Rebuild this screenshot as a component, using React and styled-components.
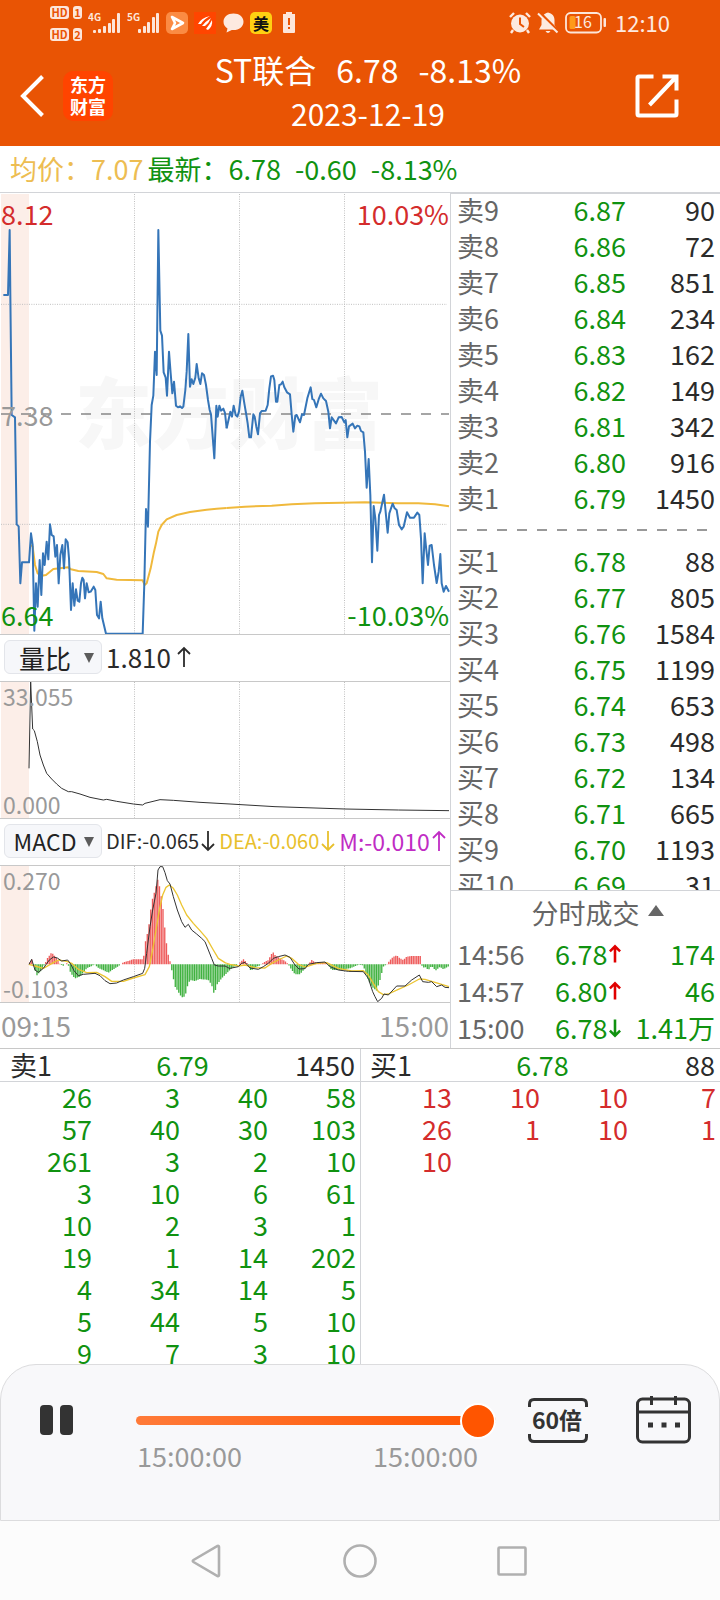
import React, { useState } from "react";
import styled, { createGlobalStyle } from "styled-components";

const GREEN = "#109210";
const RED = "#d42c2c";

// chart drawings use three units per pixel; lines are stored in two halves
const HALF = 675;

const priceLeft =
  "10,330 24,330 29,135 31,330 35,690 45,697 50,1018 56,1024 61,1195 66,1132 87,1132 93,1045 98,1080 103,1337 108,1195 113,1265 119,1125 124,1230 129,1105 134,1140 140,1070 145,1123 150,1018 155,1050 161,1054 166,1115 171,1080 176,1195 181,1110 187,1080 192,1150 197,1063 203,1072 207,1120 213,1275 218,1195 223,1262 228,1213 233,1247 238,1250 243,1195 247,1178 251,1185 255,1240 260,1195 266,1222 272,1220 281,1205 286,1215 291,1290 297,1300 302,1250 307,1300 318,1346 428,1346 433,1195 438,972 444,1025 450,770 455,660 460,632 465,500 470,570 475,135 481,437 486,452 491,562 497,578 501,632 507,500 512,565 517,625 522,590 528,662 534,667 540,664 546,669 550,665 556,615 560,560 565,447 570,605 575,583 580,597 586,578 590,537 596,580 601,597 606,565 612,570 618,600 624,645 629,675 633,688 643,820 649,662 653,695 658,662 663,677 670,671 675,684 680,730";
const priceRight =
  "5,730 16,680 21,695 26,662 32,690 37,695 42,680 47,635 52,617 58,655 64,690 68,715 73,757 78,757 85,688 89,695 94,725 99,748 105,685 110,678 122,677 128,660 133,610 138,574 144,572 148,585 153,650 157,650 163,600 168,598 173,590 178,607 186,622 195,628 200,688 205,740 211,692 215,690 225,712 231,688 237,690 247,640 257,607 262,642 267,645 274,667 282,640 288,626 295,640 303,648 310,680 315,730 320,697 333,715 341,697 350,696 358,712 362,705 367,757 372,724 383,716 390,730 397,722 403,724 408,738 415,742 420,800 425,908 431,822 436,930 441,1132 446,963 451,1000 457,1097 462,990 466,980 477,929 488,1043 493,985 498,970 503,956 509,970 515,975 522,1020 530,1033 536,1025 546,982 555,998 567,998 577,983 583,990 588,1060 593,1195 599,1045 604,1095 609,1140 614,1082 620,1080 627,1140 635,1194 641,1160 646,1107 650,1195 656,1220 663,1203 672,1220";
const avgLeft =
  "93,1080 98,1085 105,1140 113,1165 125,1172 138,1170 150,1160 160,1152 205,1147 213,1153 235,1158 290,1161 310,1167 320,1180 350,1184 428,1186 434,1200 440,1195 452,1150 462,1100 468,1075 475,1040 485,1020 500,1003 530,990 570,981 620,974 650,971 680,969";
const avgRight = "5,969 60,965 140,962 200,958 270,955 350,953 420,952 520,955 580,955 630,958 672,964";
const ratioLeft =
  "87,415 92,156 98,297 103,302 112,335 120,375 130,405 140,430 155,447 170,462 185,475 205,485 215,485 240,492 270,502 310,510 320,508 350,514 400,522 428,525 435,520 480,509 520,511 600,517 690,522";
const ratioRight = "15,522 150,530 360,537 520,540 672,542";
const difLeft =
  "87,1003 95,988 105,1020 115,1027 130,1015 148,990 160,981 172,984 185,993 203,990 212,1002 222,1022 235,1037 250,1033 285,1030 300,1037 315,1052 330,1061 350,1059 370,1050 400,1040 428,1030 434,1015 440,970 450,890 458,840 468,790 474,720 480,710 488,710 495,728 502,752 510,762 520,800 532,840 545,875 555,892 565,883 575,900 590,912 605,925 615,935 625,960 635,985 643,1005 655,1008 675,1008 690,1016";
const difRight =
  "15,1015 40,1010 50,1000 60,997 75,1014 100,1018 115,1010 130,1000 145,985 160,980 180,975 195,982 210,1005 222,1017 240,1016 250,1003 275,998 300,996 315,1010 340,1020 370,1024 415,1025 430,1045 443,1085 450,1100 458,1115 470,1105 477,1092 490,1095 515,1068 540,1068 560,1050 583,1035 593,1055 610,1057 620,1055 635,1070 650,1065 660,1072 672,1073";
const deaLeft =
  "87,1003 105,1008 130,1015 160,998 175,990 200,994 215,1000 235,1018 260,1028 290,1027 315,1040 335,1054 370,1054 400,1044 435,1034 448,1010 458,960 468,900 478,840 488,795 498,772 508,765 520,775 532,795 545,825 560,855 580,880 600,902 620,925 640,960 655,985 675,998 680,1000";
const deaRight =
  "5,1000 15,1003 40,1008 60,1005 90,1013 120,1014 140,1000 160,990 185,978 200,985 220,1003 240,1011 275,1000 305,998 340,1015 380,1023 415,1022 430,1035 445,1060 460,1085 475,1094 490,1092 520,1078 550,1065 583,1047 600,1048 640,1060 672,1070";

// height of the MACD bars around the zero line, [x, y]
const ZERO = 1003;
const barShape = [
  [88, 1000], [95, 988], [100, 1003], [110, 1037], [125, 1020], [134, 1003], [142, 985], [155, 967], [170, 985],
  [180, 1003], [190, 1007], [200, 999], [207, 1010], [212, 1030], [225, 1045], [240, 1040], [260, 1015], [285, 1003],
  [292, 1012], [325, 1028], [360, 1005], [370, 997], [400, 988], [430, 988], [437, 930], [445, 900], [455, 815],
  [465, 780], [475, 743], [480, 780], [487, 815], [492, 870], [497, 920], [503, 968], [508, 985], [512, 1003],
  [517, 1030], [525, 1070], [545, 1102], [555, 1100], [562, 1070], [570, 1050], [585, 1053], [600, 1047],
  [625, 1050], [635, 1065], [643, 1095], [650, 1065], [665, 1045], [680, 1030], [695, 1015], [715, 1003],
  [730, 987], [742, 1000], [753, 1023], [765, 1012], [780, 1006], [790, 998], [805, 990], [818, 965], [825, 975],
  [840, 985], [855, 993], [865, 1003], [875, 1020], [885, 1033], [900, 1033], [915, 1015], [925, 1003],
  [935, 990], [945, 997], [975, 997], [985, 1005], [995, 1020], [1020, 1020], [1050, 1015], [1075, 1004],
  [1090, 1006], [1100, 1040], [1115, 1070], [1130, 1082], [1140, 1050], [1150, 1010], [1160, 1003], [1170, 990],
  [1180, 980], [1190, 976], [1200, 985], [1210, 990], [1220, 980], [1235, 978], [1262, 978], [1267, 1015],
  [1275, 1010], [1285, 1020], [1295, 1008], [1307, 1022], [1320, 1010], [1330, 1018], [1347, 1008]
];

const bars = [];
for (let x = 90, i = 0; x < 1347; x += 5.25) {
  while (i < barShape.length - 2 && barShape[i + 1][0] < x) i++;
  const [x0, y0] = barShape[i];
  const [x1, y1] = barShape[i + 1];
  bars.push([x, y0 + ((y1 - y0) * (x - x0)) / (x1 - x0)]);
}
const barPath = list => list.map(([x, y]) => `M${x.toFixed(1)} ${ZERO}V${y.toFixed(1)}`).join("");

const sells = [
  ["卖9", "6.87", "90"],
  ["卖8", "6.86", "72"],
  ["卖7", "6.85", "851"],
  ["卖6", "6.84", "234"],
  ["卖5", "6.83", "162"],
  ["卖4", "6.82", "149"],
  ["卖3", "6.81", "342"],
  ["卖2", "6.80", "916"],
  ["卖1", "6.79", "1450"]
];
const buys = [
  ["买1", "6.78", "88"],
  ["买2", "6.77", "805"],
  ["买3", "6.76", "1584"],
  ["买4", "6.75", "1199"],
  ["买5", "6.74", "653"],
  ["买6", "6.73", "498"],
  ["买7", "6.72", "134"],
  ["买8", "6.71", "665"],
  ["买9", "6.70", "1193"],
  ["买10", "6.69", "31"]
];
const trades = [
  { time: "14:56", price: "6.78", up: true, amount: "174" },
  { time: "14:57", price: "6.80", up: true, amount: "46" },
  { time: "15:00", price: "6.78", up: false, amount: "1.41万" }
];
const sellQueue = [
  [26, 3, 40, 58],
  [57, 40, 30, 103],
  [261, 3, 2, 10],
  [3, 10, 6, 61],
  [10, 2, 3, 1],
  [19, 1, 14, 202],
  [4, 34, 14, 5],
  [5, 44, 5, 10],
  [9, 7, 3, 10]
];
const buyQueue = [[13, 10, 10, 7], [26, 1, 10, 1], [10]];

function Halves({ left, right, color, width }) {
  return (
    <g fill="none" stroke={color} strokeWidth={width} strokeLinejoin="round">
      <polyline points={left} />
      <polyline points={right} transform={`translate(${HALF} 0)`} />
    </g>
  );
}

function Grid({ top, bottom, rows = [] }) {
  return (
    <>
      <rect x="3" y={top} width="84" height={bottom - top} fill="#fceee8" />
      <g stroke="#c0c0c0" strokeWidth="3" strokeDasharray="3 4">
        {[403.5, 718.5, 1033.5].map(x => (
          <line key={x} x1={x} x2={x} y1={top} y2={bottom} />
        ))}
        {rows.map(y => (
          <line key={y} x1="3" x2="1341" y1={y} y2={y} />
        ))}
      </g>
    </>
  );
}

function Arrow({ up, color, width = 14, height = 24, stroke = 1.8 }) {
  return (
    <svg width={width} height={height} viewBox="0 0 14 22" aria-hidden="true">
      <path
        d={up ? "M7 21V2M1 8L7 2L13 8" : "M7 1V20M1 14L7 20L13 14"}
        fill="none"
        stroke={color}
        strokeWidth={stroke}
      />
    </svg>
  );
}

function Signal({ label, bars: heights }) {
  return (
    <svg width="33" height="22" viewBox="0 0 33 22">
      <text x="0" y="9" fontSize="10" fontWeight="700" fill="#fde6da">
        {label}
      </text>
      <g fill="#fde6da">
        {heights.map(([x, h]) => (
          <rect key={x} x={x} y={21 - h} width="3" height={h} rx="1" />
        ))}
      </g>
    </svg>
  );
}

function StatusBar() {
  return (
    <Status>
      <Cards>
        {["1", "2"].map(n => (
          <Card key={n}>
            <Badge $wide>HD</Badge>
            <Badge>{n}</Badge>
          </Card>
        ))}
      </Cards>
      <Signal label="4G" bars={[[5, 3], [10, 4], [15, 7], [20, 10], [24, 14], [29, 20]]} />
      <Signal label="5G" bars={[[11, 4], [16, 7], [20, 11], [25, 16], [29, 20]]} />
      <svg width="22" height="22" viewBox="0 0 22 22">
        <rect width="22" height="22" rx="5" fill="#fb8b43" />
        <path d="M6 5L17 11L6 17L9 11Z" fill="#fb8b43" stroke="#fff" strokeWidth="2.6" strokeLinejoin="round" />
      </svg>
      <svg width="22" height="22" viewBox="0 0 22 22">
        <rect width="22" height="22" fill="#ff4500" />
        <path d="M4 12Q7 6 16 4Q10 7 7 12ZM8 14Q12 9 17 6Q15 11 11 14ZM12 17Q16 12 18 8Q19 14 14 18Z" fill="#fff" />
      </svg>
      <svg width="22" height="22" viewBox="0 0 22 22">
        <path d="M11.500 1.500C5.700 1.500 1.500 5 1.500 9.800C1.500 12.800 3.200 15.200 5.500 16.600L4.500 20.500L9.800 18C16.500 18.700 21.500 15 21.500 9.800C21.500 5 17.300 1.500 11.500 1.500Z" fill="#fdeae0" />
      </svg>
      <Meituan>美</Meituan>
      <svg width="22" height="22" viewBox="0 0 22 22">
        <path d="M8 0H14V2H17V20Q17 21 16 21H6Q5 21 5 20V2H8Z" fill="#fde6da" />
        <path d="M11 6V13M11 15V17" stroke="#e95404" strokeWidth="2" />
      </svg>
      <Spacer />
      <svg width="22" height="22" viewBox="0 0 22 22">
        <circle cx="11" cy="11.500" r="9" fill="#fdeae0" />
        <path d="M1 5L5 1M17 1L21 5M4 18L2 21M18 18L20 21" stroke="#fdeae0" strokeWidth="2.400" />
        <path d="M11 5.500V12L15 15" fill="none" stroke="#e95404" strokeWidth="2" />
      </svg>
      <svg width="22" height="22" viewBox="0 0 22 22">
        <path d="M11 0.500C6.500 1.500 4.500 5 4.500 9V13L2 17.500H20L17.500 13V8C17.500 4 15 1.300 11 0.500ZM8.500 19H13.500Q11 23 8.500 19Z" fill="#fdeae0" />
        <path d="M2 0L22 20" stroke="#e95404" strokeWidth="3" />
        <path d="M1 1.500L20.500 20.500" stroke="#fdeae0" strokeWidth="2" />
      </svg>
      <svg width="42" height="22" viewBox="0 0 42 22">
        <rect x="1" y="1" width="35" height="19.500" rx="4.500" fill="none" stroke="#fde6da" strokeWidth="1.800" />
        <rect x="4.500" y="4" width="6" height="13" rx="1.500" fill="#ff9a1a" />
        <rect x="38.500" y="6" width="2.500" height="9" rx="1" fill="#fde6da" />
        <text x="18" y="16" fontSize="16" textAnchor="middle" fill="#fdeae0">
          16
        </text>
      </svg>
      <Clock>12:10</Clock>
    </Status>
  );
}

function Header() {
  return (
    <TitleBar>
      <TitleSide>
        <IconButton aria-label="返回">
          <svg width="32" height="42" viewBox="0 0 32 42">
            <path d="M26.500 1.500L7 21L26.500 40.500" fill="none" stroke="#fff" strokeWidth="4" />
          </svg>
        </IconButton>
        <Logo>
          东方
          <br />
          财富
        </Logo>
      </TitleSide>
      <TitleText>
        <TitleLine>
          <span>ST联合</span>
          <span>6.78</span>
          <span>-8.13%</span>
        </TitleLine>
        <DateLine>2023-12-19</DateLine>
      </TitleText>
      <TitleSide $end>
        <IconButton aria-label="分享">
          <svg width="44" height="44" viewBox="0 0 44 44">
            <g fill="none" stroke="#fff" strokeWidth="4">
              <path d="M18.500 2.500H4Q2.500 2.500 2.500 4V40Q2.500 41.500 4 41.500H40Q41.500 41.500 41.500 40V25.500" />
              <path d="M27.500 2.500H41.500V16.500M41.500 2.500L14.500 31" />
            </g>
          </svg>
        </IconButton>
      </TitleSide>
    </TitleBar>
  );
}

function Indicator({ label, value, size, children }) {
  return (
    <IndicatorBar>
      <Picker>
        <Select aria-label={label} defaultValue={value} $size={size}>
          <option>{value}</option>
        </Select>
        <svg width="10" height="10" viewBox="0 0 10 10">
          <path d="M0 0H10L5 10Z" fill="#5c5c5c" />
        </svg>
      </Picker>
      {children}
    </IndicatorBar>
  );
}

function Charts() {
  return (
    <ChartColumn>
      <Chart>
        <Watermark>东方财富</Watermark>
        <Plot $height={441} viewBox="0 24 1350 1323" preserveAspectRatio="none">
          <Grid top={27} bottom={1347} rows={[358, 1018]} />
          <line x1="3" x2="1347" y1="687" y2="687" stroke="#888" strokeWidth="5" strokeDasharray="30 30" />
          <Halves left={avgLeft} right={avgRight} color="#f0b93c" width="6" />
          <Halves left={priceLeft} right={priceRight} color="#3575b8" width="6" />
        </Plot>
        <Labels>
          <LabelRow>
            <Mark $color={RED}>8.12</Mark>
            <Mark $color={RED}>10.03%</Mark>
          </LabelRow>
          <LabelRow>
            <Mark $color="#999">7.38</Mark>
          </LabelRow>
          <LabelRow>
            <Mark $color={GREEN}>6.64</Mark>
            <Mark $color={GREEN}>-10.03%</Mark>
          </LabelRow>
        </Labels>
      </Chart>
      <Indicator label="指标" value="量比" size={26}>
        <Value $size={26} $gap={6}>
          1.810 <Arrow up color="#2b2b2b" />
        </Value>
      </Indicator>
      <Chart>
        <Plot $height={136} viewBox="0 156 1350 408" preserveAspectRatio="none">
          <Grid top={156} bottom={564} />
          <Halves left={ratioLeft} right={ratioRight} color="#333" width="3" />
        </Plot>
        <Labels $small>
          <Mark $small $color="#999">33.055</Mark>
          <Mark $small $color="#999">0.000</Mark>
        </Labels>
      </Chart>
      <Indicator label="副图指标" value="MACD" size={23}>
        <Value $size={20}>
          DIF:-0.065 <Arrow color="#2b2b2b" />
        </Value>
        <Value $size={20} $color="#e8c02c">
          DEA:-0.060 <Arrow color="#e8c02c" />
        </Value>
        <Value $size={23} $color="#c02cc4">
          M:-0.010 <Arrow up color="#c02cc4" />
        </Value>
      </Indicator>
      <Chart>
        <Plot $height={136} viewBox="0 708 1350 408" preserveAspectRatio="none">
          <Grid top={708} bottom={1116} />
          <path d={barPath(bars.filter(b => b[1] < ZERO))} stroke="#ee5a5a" strokeWidth="4" />
          <path d={barPath(bars.filter(b => b[1] >= ZERO))} stroke="#3fb13f" strokeWidth="4" />
          <Halves left={deaLeft} right={deaRight} color="#ecc532" width="4" />
          <Halves left={difLeft} right={difRight} color="#333" width="3" />
        </Plot>
        <Labels $small>
          <Mark $small $color="#999">0.270</Mark>
          <Mark $small $color="#999">-0.103</Mark>
        </Labels>
      </Chart>
      <TimeAxis>
        <span>09:15</span>
        <span>15:00</span>
      </TimeAxis>
    </ChartColumn>
  );
}

function Orders({ rows }) {
  return (
    <Table>
      <OrderBody>
        {rows.map(([name, price, amount]) => (
          <OrderRow key={name}>
            <Cell $color="#666" $left>{name}</Cell>
            <Cell $color={GREEN}>{price}</Cell>
            <Cell>{amount}</Cell>
          </OrderRow>
        ))}
      </OrderBody>
    </Table>
  );
}

function Book() {
  return (
    <BookColumn>
      <BookList>
        <Orders rows={sells} />
        <Divider />
        <Orders rows={buys} />
      </BookList>
      <Trades>
        <TradesButton>
          分时成交
          <svg width="16" height="20" viewBox="0 0 16 20">
            <path d="M8 2L16 13H0Z" fill="#666" />
          </svg>
        </TradesButton>
        <Table>
          <tbody>
            {trades.map(({ time, price, up, amount }) => (
              <TradeRow key={time}>
                <Cell $color="#666" $left>{time}</Cell>
                <Cell $color={GREEN} $left>
                  {price}
                  <Arrow up={up} color={up ? "#e00000" : GREEN} width={12} height={20} stroke={3} />
                </Cell>
                <Cell $color={GREEN}>{amount}</Cell>
              </TradeRow>
            ))}
          </tbody>
        </Table>
      </Trades>
    </BookColumn>
  );
}

function Queue({ name, price, amount, rows, color }) {
  return (
    <QueueColumn>
      <QueueHead>
        <span>{name}</span>
        <QueuePrice>{price}</QueuePrice>
        <QueueAmount>{amount}</QueueAmount>
      </QueueHead>
      <Table>
        <QueueBody>
          {rows.map((row, idx) => (
            <QueueRow key={idx}>
              {row.map((n, i) => (
                <Cell key={i} $color={color}>{n}</Cell>
              ))}
            </QueueRow>
          ))}
        </QueueBody>
      </Table>
    </QueueColumn>
  );
}

function Player() {
  const [position, setPosition] = useState(100);

  return (
    <PlayerPanel>
      <IconButton aria-label="暂停">
        <svg width="33" height="30" viewBox="0 0 33 30">
          <rect width="13" height="30" rx="4" fill="#333" />
          <rect x="20" width="13" height="30" rx="4" fill="#333" />
        </svg>
      </IconButton>
      <Progress>
        <Slider
          type="range"
          min="0"
          max="100"
          aria-label="播放进度"
          value={position}
          onChange={e => setPosition(Number(e.target.value))}
        />
        <Times>
          <span>15:00:00</span>
          <span>15:00:00</span>
        </Times>
      </Progress>
      <IconButton aria-label="播放速度 60倍">
        <svg width="60" height="48" viewBox="0 0 60 48">
          <g fill="none" stroke="#333" strokeWidth="3">
            <path d="M1.500 11V8Q1.500 3.500 6 3.500H54Q58.500 3.500 58.500 8V11" />
            <path d="M1.500 38V41Q1.500 45.500 6 45.500H54Q58.500 45.500 58.500 41V38" />
          </g>
          <text x="29" y="33" fontSize="23" fontWeight="700" textAnchor="middle" fill="#333">
            60倍
          </text>
        </svg>
      </IconButton>
      <CalendarButton aria-label="选择日期">
        <svg width="55" height="48" viewBox="0 0 55 48">
          <rect x="1.500" y="3" width="52" height="43" rx="5" fill="none" stroke="#333" strokeWidth="3" />
          <path d="M2 16H53M15.500 0V9M39.500 0V9" stroke="#333" strokeWidth="3" />
          <path d="M12 29H17M25.500 29H30.500M39 29H44" stroke="#333" strokeWidth="5" />
        </svg>
      </CalendarButton>
    </PlayerPanel>
  );
}

function App() {
  return (
    <Page>
      <GlobalStyle />
      <Top>
        <StatusBar />
        <Header />
      </Top>
      <Summary>
        <Quote $color="#edbd52">均价：7.07</Quote>
        <Quote $color={GREEN}>
          <span>最新：6.78</span>
          <span>-0.60</span>
          <span>-8.13%</span>
        </Quote>
      </Summary>
      <Market>
        <Charts />
        <Book />
      </Market>
      <Queues>
        <Queue name="卖1" price="6.79" amount="1450" rows={sellQueue} color={GREEN} />
        <Queue name="买1" price="6.78" amount="88" rows={buyQueue} color={RED} />
      </Queues>
      <Player />
      <NavBar>
        <IconButton aria-label="后退">
          <svg width="34" height="34" viewBox="0 0 34 34">
            <path d="M28 3V31Q28 32.500 26.500 32L2.500 18Q1 17 2.500 16L26.500 2Q28 1.500 28 3Z" fill="none" stroke="#b0b0b0" strokeWidth="2.600" />
          </svg>
        </IconButton>
        <IconButton aria-label="主页">
          <svg width="34" height="34" viewBox="0 0 34 34">
            <circle cx="17" cy="17" r="15.500" fill="none" stroke="#b0b0b0" strokeWidth="2.600" />
          </svg>
        </IconButton>
        <IconButton aria-label="最近任务">
          <svg width="34" height="34" viewBox="0 0 34 34">
            <rect x="3.500" y="3.500" width="27" height="27" rx="1" fill="none" stroke="#b0b0b0" strokeWidth="2.600" />
          </svg>
        </IconButton>
      </NavBar>
    </Page>
  );
}

const GlobalStyle = createGlobalStyle`
  * {
    box-sizing: border-box;
  }

  body {
    margin: 0;
    background: #fff;
    color: #2b2b2b;
    font-family: "Noto Sans CJK SC", sans-serif;
    font-size: 27px;
  }

  svg {
    display: block;
    flex: none;
  }

  button,
  select {
    border: 0;
    padding: 0;
    background: none;
    color: inherit;
    font: inherit;
  }
`;

const Page = styled.div`
  display: flex;
  flex-direction: column;
  min-height: 100vh;
`;

const Top = styled.header`
  background: #e95404;
  color: #fff;
`;

const Status = styled.div`
  display: flex;
  align-items: center;
  gap: 6px;
  height: 46px;
  padding: 0 50px;
`;

const Cards = styled.div`
  display: flex;
  flex-direction: column;
  gap: 9px;
  width: 32px;
`;

const Card = styled.div`
  display: flex;
  gap: 4px;
`;

const Badge = styled.span`
  width: ${({ $wide }) => ($wide ? "19px" : "9px")};
  border-radius: 3px;
  background: #fde6da;
  color: #e95404;
  font-size: 11px;
  font-weight: 700;
  line-height: 13px;
  text-align: center;
`;

const Meituan = styled.span`
  width: 22px;
  border-radius: 5px;
  background: #ffd012;
  color: #111;
  font-size: 16px;
  font-weight: 700;
  line-height: 22px;
  text-align: center;
`;

const Spacer = styled.div`
  flex: 1;
`;

const Clock = styled.span`
  padding: 0 0 2px 2px;
  color: #fdeae0;
  font-size: 22px;
  line-height: 22px;
`;

const TitleBar = styled.div`
  display: grid;
  grid-template-columns: 1fr auto 1fr;
  align-items: center;
  height: 100px;
  padding-left: 16px;
`;

const TitleSide = styled.div`
  display: flex;
  align-items: center;
  justify-content: ${({ $end }) => ($end ? "flex-end" : "flex-start")};
  gap: 15px;
  padding-right: ${({ $end }) => ($end ? "41px" : "0")};
`;

const IconButton = styled.button`
  display: flex;
  align-items: center;
  justify-content: center;
  cursor: pointer;
`;

const Logo = styled.div`
  width: 50px;
  padding: 2px 0 4px;
  border-radius: 10px;
  background: #ff4400;
  font-size: 18px;
  font-weight: 700;
  line-height: 22px;
  text-align: center;
`;

const TitleText = styled.div`
  align-self: start;
  padding-top: 1px;
  line-height: 44px;
  text-align: center;
`;

const TitleLine = styled.div`
  display: flex;
  gap: 20px;
  font-size: 32px;
`;

const DateLine = styled.div`
  font-size: 30px;
`;

const Summary = styled.div`
  display: flex;
  gap: 4px;
  padding: 0 10px;
  border-bottom: 1px solid #d2d4d8;
  line-height: 46px;
`;

const Quote = styled.div`
  display: flex;
  gap: 14px;
  color: ${({ $color }) => $color};
`;

const Market = styled.main`
  display: grid;
  grid-template-columns: minmax(0, 5fr) minmax(0, 3fr);
`;

const ChartColumn = styled.section`
  min-width: 0;
`;

const Chart = styled.div`
  position: relative;
  border-bottom: 1px solid #c8c8c8;
`;

const Plot = styled.svg`
  position: relative;
  width: 100%;
  height: ${({ $height }) => $height}px;
`;

const Watermark = styled.div`
  position: absolute;
  inset: 0;
  display: flex;
  align-items: center;
  justify-content: center;
  padding: 0 0 8px 8px;
  color: #f7f7f7;
  font-size: 77px;
  font-weight: 900;
`;

const Labels = styled.div`
  position: absolute;
  inset: 0;
  display: flex;
  flex-direction: column;
  justify-content: space-between;
  padding: ${({ $small }) => ($small ? "0 3px" : "2px 1px 0")};
`;

const LabelRow = styled.div`
  display: flex;
  justify-content: space-between;
`;

const Mark = styled.span`
  color: ${({ $color }) => $color};
  font-size: ${({ $small }) => ($small ? "23px" : "27px")};
  line-height: ${({ $small }) => ($small ? "28px" : "38px")};
`;

const IndicatorBar = styled.div`
  display: flex;
  align-items: center;
  gap: 4px;
  height: 47px;
  padding: 0 0 2px 4px;
  border-bottom: 1px solid #c8c8c8;
`;

const Picker = styled.div`
  position: relative;
  display: flex;
  align-items: center;
  flex: none;
  width: 98px;
  height: 34px;
  border: 1px solid #e3e5ea;
  border-radius: 6px;
  background: #f6f7fa;

  svg {
    position: absolute;
    top: 12px;
    right: 7px;
    pointer-events: none;
  }
`;

const Select = styled.select`
  width: 100%;
  height: 44px;
  padding-right: 16px;
  color: #222;
  font-size: ${({ $size }) => $size}px;
  text-align-last: center;
  appearance: none;
`;

const Value = styled.span`
  display: flex;
  align-items: center;
  gap: ${({ $gap = 2 }) => $gap}px;
  color: ${({ $color }) => $color || "#2b2b2b"};
  font-size: ${({ $size }) => $size}px;
  line-height: 34px;
  white-space: nowrap;
`;

const TimeAxis = styled.div`
  display: flex;
  justify-content: space-between;
  padding: 0 1px;
  color: #999;
  font-size: 28px;
  line-height: 45px;
`;

const BookColumn = styled.section`
  display: flex;
  flex-direction: column;
  border-top: 1px solid #d2d4d8;
  border-left: 1px solid #d2d4d8;
`;

const BookList = styled.div`
  flex: 1 1 0px;
  min-height: 0;
  overflow: hidden;
`;

const Table = styled.table`
  display: block;

  tbody {
    display: block;
  }
`;

const OrderBody = styled.tbody`
  && {
    display: grid;
    gap: 4px;
  }
`;

const OrderRow = styled.tr`
  display: grid;
  grid-template-columns: 1fr 89px 89px;
  padding: 0 5px 0 6px;
  line-height: 32px;
`;

const Cell = styled.td`
  display: flex;
  align-items: center;
  justify-content: ${({ $left }) => ($left ? "flex-start" : "flex-end")};
  gap: 2px;
  padding: 0;
  color: ${({ $color }) => $color || "#2b2b2b"};
  white-space: nowrap;
`;

const Divider = styled.div`
  height: 31px;
  margin: 0 10px 0 6px;
  background: repeating-linear-gradient(90deg, #999 0 10px, transparent 10px 20px) 0 50% / 100% 2px no-repeat;
`;

const Trades = styled.div`
  padding-bottom: 2px;
  border-top: 1px solid #d2d4d8;
`;

const TradesButton = styled.button`
  display: flex;
  align-items: center;
  justify-content: center;
  gap: 8px;
  width: 100%;
  padding-left: 24px;
  color: #666;
  line-height: 44px;
`;

const TradeRow = styled.tr`
  display: grid;
  grid-template-columns: 1fr 66px 94px;
  padding: 0 5px 0 6px;
  line-height: 37px;
`;

const Queues = styled.section`
  display: grid;
  flex: 1 1 0px;
  grid-template-columns: 1fr 1fr;
  min-height: 200px;
  overflow: hidden;
  border-top: 1px solid #c8c8c8;
`;

const QueueColumn = styled.div`
  min-height: 0;

  & + & {
    box-shadow: inset 1px 0 #d2d4d8;
  }
`;

const QueueHead = styled.div`
  display: grid;
  grid-template-columns: 1fr auto 1fr;
  padding: 0 5px 0 10px;
  border-bottom: 1px solid #d2d4d8;
  line-height: 32px;
`;

const QueuePrice = styled.span`
  color: ${GREEN};
`;

const QueueAmount = styled.span`
  text-align: right;
`;

const QueueBody = styled.tbody`
  && {
    display: grid;
    gap: 2px;
  }
`;

const QueueRow = styled.tr`
  display: grid;
  grid-template-columns: repeat(4, 1fr);
  padding: 0 4px;
  line-height: 30px;
`;

const PlayerPanel = styled.footer`
  display: grid;
  grid-template-columns: auto 1fr auto auto;
  align-items: start;
  padding: 31px 28px 52px 39px;
  border: 1px solid #dcdcde;
  border-radius: 36px 36px 0 0;
  background: #f8f8fa;

  > button {
    height: 48px;
  }
`;

const Progress = styled.div`
  margin: 0 32px 0 63px;
`;

const Slider = styled.input`
  display: block;
  width: 100%;
  height: 48px;
  margin: 0;
  background: none;
  appearance: none;

  &::-webkit-slider-runnable-track {
    height: 9px;
    border-radius: 5px;
    background: linear-gradient(90deg, #ff7a38, #ff5500);
  }

  &::-webkit-slider-thumb {
    width: 36px;
    height: 36px;
    margin-top: -13px;
    border: 2px solid #fff;
    border-radius: 50%;
    background: #ff5500;
    appearance: none;
  }
`;

const Times = styled.div`
  display: flex;
  justify-content: space-between;
  padding: 0 18px 0 1px;
  color: #999;
  line-height: 24px;
`;

const CalendarButton = styled(IconButton)`
  margin-left: 48px;
`;

const NavBar = styled.nav`
  display: flex;
  align-items: center;
  justify-content: center;
  gap: 118px;
  height: 79px;
  background: #fcfcfc;
`;

export default App;
